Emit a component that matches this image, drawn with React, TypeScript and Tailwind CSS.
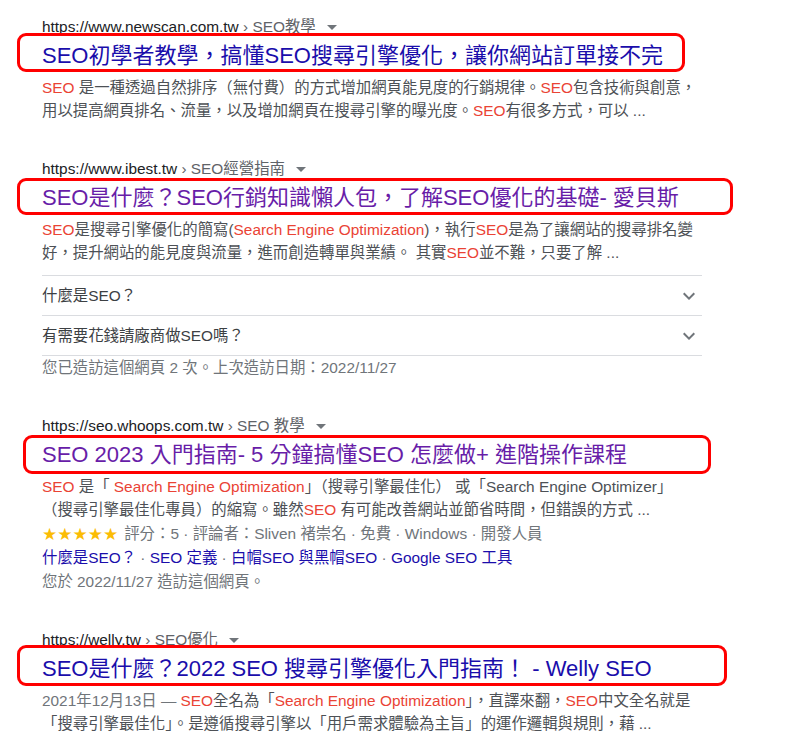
import type { ReactNode } from "react";

const Hl = ({ children }: { children: ReactNode }) => (
  <span className="text-[#ea4335]">{children}</span>
);

const Dot = () => <span className="text-[#70757a]"> · </span>;

const Cite = ({ domain, crumb }: { domain: string; crumb: string }) => (
  <div className="flex h-[22px] items-center whitespace-nowrap text-[15.4px] leading-[22px]">
    <span className="text-[#202124]">{domain}</span>
    <span className="text-[#5f6368]">&nbsp;› {crumb}</span>
    <svg width="10" height="5" viewBox="0 0 10 5" className="ml-[11px] mt-[1px]">
      <path d="M0 0h10L5 5z" fill="#70757a" />
    </svg>
  </div>
);

interface TitleProps {
  text: string;
  visited?: boolean;
  box: string;
}

const Title = ({ text, visited, box }: TitleProps) => (
  <div className="relative mt-[3px]">
    <h3
      className={
        visited
          ? "whitespace-nowrap text-[22px] leading-[29px] text-[#681da8]"
          : "whitespace-nowrap text-[22px] leading-[29px] text-[#1a0dab]"
      }
    >
      {text}
    </h3>
    {/* red annotation frame */}
    <div className={`pointer-events-none absolute rounded-[9px] border-[3px] border-[#ff0000] ${box}`} />
  </div>
);

const Snippet = ({ lines }: { lines: ReactNode[] }) => (
  <div className="mt-[5.5px] text-[15.4px] leading-[23px] text-[#4d5156]">
    {lines.map((line, i) => (
      <div key={i} className="whitespace-nowrap">
        {line}
      </div>
    ))}
  </div>
);

const Chevron = () => (
  <svg width="24" height="24" viewBox="0 0 24 24">
    <path d="M16.59 8.59 12 13.17 7.41 8.59 6 10l6 6 6-6z" fill="#70757a" />
  </svg>
);

const faqs = ["什麼是SEO？", "有需要花錢請廠商做SEO嗎？"];

export default function App() {
  return (
    <div
      className="h-[753px] w-full overflow-hidden bg-white pl-[42px] pt-[16px]"
      style={{ fontFamily: '"Liberation Sans", Arial, "Noto Sans CJK TC", sans-serif' }}
    >
      {/* result 1 */}
      <div>
        <Cite domain="https://www.newscan.com.tw" crumb="SEO教學" />
        <Title
          text="SEO初學者教學，搞懂SEO搜尋引擎優化，讓你網站訂單接不完"
          box="-left-[25px] -top-[8px] h-[39px] w-[668px]"
        />
        <Snippet
          lines={[
            <>
              <Hl>SEO</Hl> 是一種透過自然排序（無付費）的方式增加網頁能見度的行銷規律。<Hl>SEO</Hl>包含技術與創意，
            </>,
            <>
              用以提高網頁排名、流量，以及增加網頁在搜尋引擎的曝光度。<Hl>SEO</Hl>有很多方式，可以 ...
            </>,
          ]}
        />
      </div>

      {/* result 2 */}
      <div className="mt-[36.5px]">
        <Cite domain="https://www.ibest.tw" crumb="SEO經營指南" />
        <Title
          text="SEO是什麼？SEO行銷知識懶人包，了解SEO優化的基礎- 愛貝斯"
          visited
          box="-left-[25px] -top-[5px] h-[37px] w-[716px]"
        />
        <Snippet
          lines={[
            <>
              <Hl>SEO</Hl>是搜尋引擎優化的簡寫(<Hl>Search Engine Optimization</Hl>)，執行<Hl>SEO</Hl>是為了讓網站的搜尋排名變
            </>,
            <>
              好，提升網站的能見度與流量，進而創造轉單與業績。 其實<Hl>SEO</Hl>並不難，只要了解 ...
            </>,
          ]}
        />
        <div className="mt-[11.5px] w-[660px] border-t border-[#dadce0]">
          {faqs.map((q) => (
            <div
              key={q}
              className="flex h-[40px] items-center justify-between border-b border-[#dadce0] pr-[1px] text-[15.4px] text-[#3c4043]"
            >
              <span>{q}</span>
              <Chevron />
            </div>
          ))}
        </div>
        <div className="text-[15.4px] leading-[24px] text-[#70757a]">
          您已造訪這個網頁 2 次。上次造訪日期：2022/11/27
        </div>
      </div>

      {/* result 3 */}
      <div className="mt-[35px]">
        <Cite domain="https://seo.whoops.com.tw" crumb="SEO 教學" />
        <Title
          text="SEO 2023 入門指南- 5 分鐘搞懂SEO 怎麼做+ 進階操作課程"
          visited
          box="-left-[19px] -top-[5px] h-[39px] w-[688px]"
        />
        <Snippet
          lines={[
            <>
              <Hl>SEO</Hl> 是「 <Hl>Search Engine Optimization</Hl>」（搜尋引擎最佳化） 或「Search Engine Optimizer」
            </>,
            <>
              （搜尋引擎最佳化專員）的縮寫。雖然<Hl>SEO</Hl> 有可能改善網站並節省時間，但錯誤的方式 ...
            </>,
          ]}
        />
        <div className="mt-[1.5px] flex h-[24px] items-center whitespace-nowrap text-[15.4px] text-[#70757a]">
          <span
            className="mr-[6px] text-[17px] leading-[24px] text-[#fbbc04]"
            style={{ fontFamily: '"DejaVu Sans", sans-serif' }}
          >
            ★★★★★
          </span>
          <span>
            評分：5<Dot />評論者：Sliven 褚崇名<Dot />免費<Dot />Windows<Dot />開發人員
          </span>
        </div>
        <div className="whitespace-nowrap text-[15.4px] leading-[24px] text-[#1a0dab]">
          什麼是SEO？
          <Dot />
          SEO 定義
          <Dot />
          白帽SEO 與黑帽SEO
          <Dot />
          Google SEO 工具
        </div>
        <div className="text-[15.4px] leading-[24px] text-[#70757a]">您於 2022/11/27 造訪這個網頁。</div>
      </div>

      {/* result 4 */}
      <div className="mt-[35px]">
        <Cite domain="https://welly.tw" crumb="SEO優化" />
        <Title
          text="SEO是什麼？2022 SEO 搜尋引擎優化入門指南！ - Welly SEO"
          box="-left-[25px] -top-[9px] h-[41px] w-[710px]"
        />
        <Snippet
          lines={[
            <>
              <span className="text-[#70757a]">2021年12月13日 — </span>
              <Hl>SEO</Hl>全名為「<Hl>Search Engine Optimization</Hl>」，直譯來翻，<Hl>SEO</Hl>中文全名就是
            </>,
            <>「搜尋引擎最佳化」。是遵循搜尋引擎以「用戶需求體驗為主旨」的運作邏輯與規則，藉 ...</>,
          ]}
        />
      </div>
    </div>
  );
}
